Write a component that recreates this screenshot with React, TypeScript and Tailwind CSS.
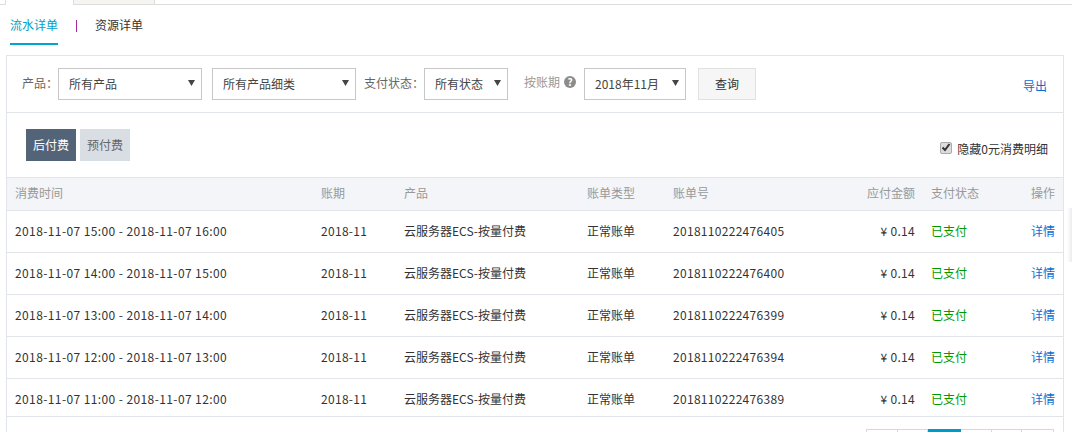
const rows = [
  { time: '2018-11-07 15:00 - 2018-11-07 16:00', no: '2018110222476405' },
  { time: '2018-11-07 14:00 - 2018-11-07 15:00', no: '2018110222476400' },
  { time: '2018-11-07 13:00 - 2018-11-07 14:00', no: '2018110222476399' },
  { time: '2018-11-07 12:00 - 2018-11-07 13:00', no: '2018110222476394' },
  { time: '2018-11-07 11:00 - 2018-11-07 12:00', no: '2018110222476389' }
]

const Select = ({ text, width }: { text: string; width: string }) => (
  <div className={`${width} flex h-[32px] items-center justify-between border border-[#c8c8c8] bg-white pl-[10px] pr-[6px] text-[#444]`}>
    <span>{text}</span>
    <svg width="7" height="6" viewBox="0 0 7 6" className="mb-[3px]">
      <path d="M0 0h7L3.5 6z" fill="#444" />
    </svg>
  </div>
)

const gridCols = 'grid grid-cols-[306px_83px_183px_86px_150px_108px_80px_1fr]'

const App = () => {
  return (
    <div className="relative h-[432px] w-[1072px] overflow-hidden bg-white text-[12px] text-[#333] [font-family:'Noto_Sans_CJK_SC','Noto_Sans',sans-serif]">
      {/* top tab strip */}
      <div className="flex h-[5px] border-b border-[#ddd] pl-[5px]">
        <div className="-mb-px h-[5px] w-[69px] border-x border-[#ddd] bg-white" />
        <div className="h-[4px] w-[81px] border-r border-[#ddd] bg-[#f6f5f1]" />
      </div>

      <div className="flex h-[40px] pl-[10px] pt-[11px]">
        <div className="h-[29px] w-[48px] border-b-2 border-[#00a5d0] text-[#00a0c8]">流水详单</div>
        <div className="ml-[18px] mt-[4px] h-[12px] w-px bg-[#a02ca0]" />
        <div className="ml-[18px] text-[#333]">资源详单</div>
      </div>

      <div className="mx-[6px] mt-[10px] w-[1058px] border border-b-0 border-[#e1e5ea] pb-[20px]">
        {/* filters */}
        <div className="flex h-[57px] items-center border-b border-[#e1e5ea] pl-[15px] pr-[16px]">
          <span className="mb-[3px] w-[36px] text-[#666]">产品：</span>
          <Select text="所有产品" width="w-[144px]" />
          <div className="ml-[10px]">
            <Select text="所有产品细类" width="w-[144px]" />
          </div>
          <span className="mb-[3px] ml-[8px] w-[60px] text-[#666]">支付状态：</span>
          <Select text="所有状态" width="w-[84px]" />
          <span className="mb-[5px] ml-[16px] text-[#999]">按账期</span>
          <span className="mb-[5px] ml-[4px] flex h-[12px] w-[12px] items-center justify-center rounded-full bg-[#8c8c8c] text-[10px] font-bold text-white">?</span>
          <div className="ml-[8px]">
            <Select text="2018年11月" width="w-[102px]" />
          </div>
          <button className="ml-[12px] h-[32px] w-[58px] border border-[#e1e1e1] bg-[#f6f6f6] text-[#333]">查询</button>
          <a className="ml-auto mt-[4px] text-[#0a6ed2]">导出</a>
        </div>

        {/* fee type */}
        <div className="flex h-[64px] items-start justify-between pl-[19px] pr-[15px] pt-[16px]">
          <div className="flex gap-[4px]">
            <div className="flex h-[32px] w-[50px] items-center justify-center bg-[#546478] text-white">后付费</div>
            <div className="flex h-[32px] w-[50px] items-center justify-center bg-[#d9dde4] text-[#666]">预付费</div>
          </div>
          <div className="mt-[11px] flex items-center gap-[5px]">
            <div className="mb-[3px] flex h-[12px] w-[12px] items-center justify-center rounded-[2px] border border-[#aaa] bg-[#dcdcdc]">
              <svg width="10" height="9" viewBox="0 0 10 9">
                <path d="M1.5 4.5 4 7l4.5-6" fill="none" stroke="#333" strokeWidth="2" />
              </svg>
            </div>
            <span>隐藏0元消费明细</span>
          </div>
        </div>

        {/* table */}
        <div className={`${gridCols} h-[34px] items-center border-y border-[#e1e5ea] bg-[#f3f5f8] pb-[2px] text-[#999]`}>
          <div className="pl-[8px]">消费时间</div>
          <div className="pl-[8px]">账期</div>
          <div className="pl-[8px]">产品</div>
          <div className="pl-[8px]">账单类型</div>
          <div className="pl-[8px]">账单号</div>
          <div className="pr-[8px] text-right">应付金额</div>
          <div className="pl-[8px]">支付状态</div>
          <div className="pr-[8px] text-right">操作</div>
        </div>
        {rows.map((row, i) => (
          <div
            key={row.no}
            className={`${gridCols} border-b border-[#e1e5ea] ${i === 4 ? 'h-[38px] items-start pt-[11px]' : 'h-[42px] items-center pb-[2px]'}`}
          >
            <div className="pl-[8px] tracking-[0.4px]">{row.time}</div>
            <div className="pl-[8px] tracking-[0.3px]">2018-11</div>
            <div className="pl-[8px]">云服务器ECS-按量付费</div>
            <div className="pl-[8px]">正常账单</div>
            <div className="pl-[8px] tracking-[0.3px]">{row.no}</div>
            <div className="pr-[8px] text-right tracking-[0.3px]">¥ 0.14</div>
            <div className="pl-[8px] text-[#009a00]">已支付</div>
            <div className="pr-[8px] text-right text-[#0a6ed2]">详情</div>
          </div>
        ))}

        {/* pagination, cut off by the bottom of the window */}
        <div className="mt-[12px] flex justify-end pr-[9px]">
          <div className="h-[24px] w-[32px] border-x border-t border-[#d8d8d8]" />
          <div className="h-[24px] w-[30px] border-r border-t border-[#d8d8d8]" />
          <div className="h-[24px] w-[33px] border-t-[3px] border-[#0099cc] bg-[#0099cc]" />
          <div className="h-[24px] w-[31px] border-r border-t border-[#d8d8d8]" />
          <div className="h-[24px] w-[30px] border-r border-t border-[#d8d8d8]" />
          <div className="h-[24px] w-[32px] border-r border-t border-[#d8d8d8]" />
        </div>
      </div>

      {/* scroll shadow on the window edge */}
      <div className="absolute right-0 top-[208px] h-[54px] w-[5px] bg-gradient-to-r from-transparent to-[#ececec]" />
    </div>
  )
}

export default App
